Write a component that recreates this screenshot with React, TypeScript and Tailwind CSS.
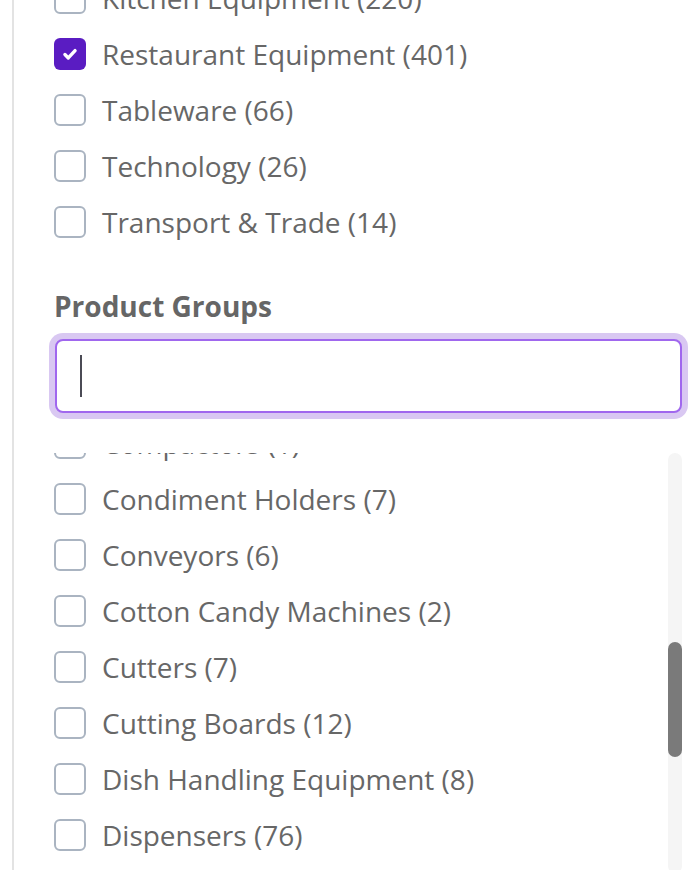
import React from 'react';

type Item = { label: string; count: number; checked?: boolean };

const categories: Item[] = [
  { label: 'Kitchen Equipment', count: 220 },
  { label: 'Restaurant Equipment', count: 401, checked: true },
  { label: 'Tableware', count: 66 },
  { label: 'Technology', count: 26 },
  { label: 'Transport & Trade', count: 14 },
];

const groups: Item[] = [
  { label: 'Compactors', count: 1 },
  { label: 'Condiment Holders', count: 7 },
  { label: 'Conveyors', count: 6 },
  { label: 'Cotton Candy Machines', count: 2 },
  { label: 'Cutters', count: 7 },
  { label: 'Cutting Boards', count: 12 },
  { label: 'Dish Handling Equipment', count: 8 },
  { label: 'Dispensers', count: 76 },
  { label: 'Dough Machines', count: 9 },
];

const CheckRow: React.FC<{ item: Item }> = ({ item }) => (
  <label className="flex items-center h-[56px] gap-4 cursor-pointer">
    {item.checked ? (
      <span className="w-8 h-8 shrink-0 rounded-[6px] bg-[#5a1cc2] flex items-center justify-center">
        <svg width="18" height="18" viewBox="0 0 16 16" fill="none">
          <path d="M3.5 8.5l3 3 6-6.5" stroke="white" strokeWidth="3" strokeLinecap="round" strokeLinejoin="round" />
        </svg>
      </span>
    ) : (
      <span className="w-8 h-8 shrink-0 rounded-[6px] border-2 border-[#aab4c1] bg-white" />
    )}
    <span className="text-[28px] leading-none text-[#676767] whitespace-nowrap">
      {item.label} ({item.count})
    </span>
  </label>
);

export default function App() {
  return (
    <div className="h-[870px] overflow-hidden bg-white" style={{ fontFamily: '"Open Sans", "Noto Sans", sans-serif' }}>
      <div className="ml-3 h-full flex flex-col border-l-2 border-[#e3e3e3] pl-[40px] pr-[12px]">
        {/* categories */}
        <div className="mt-[-30px]">
          {categories.map(c => (
            <CheckRow key={c.label} item={c} />
          ))}
        </div>

        {/* product groups */}
        <h3 className="mt-[38px] h-9 flex items-center text-[28px] font-bold text-[#666666]">Product Groups</h3>
        <div className="mt-[15px] ml-[1px] h-[74px] shrink-0 rounded-[8px] border-2 border-[#a067ee] bg-white ring-[6px] ring-[#d9c8f2] flex items-center pl-[23px]">
          <span className="w-[2px] h-[42px] bg-[#4b4b55]" />
        </div>

        <div className="mt-[40px] flex h-[420px] shrink-0 overflow-hidden">
          <div className="flex-1 overflow-hidden">
            <div className="mt-[-41px] pt-[3px]">
              {groups.map(g => (
                <CheckRow key={g.label} item={g} />
              ))}
            </div>
          </div>
          <div className="w-[14px] shrink-0 rounded-full bg-[#f5f5f5] flex flex-col">
            <div className="mt-[189px] h-[115px] rounded-full bg-[#7a7a7a]" />
          </div>
        </div>
      </div>
    </div>
  );
}
